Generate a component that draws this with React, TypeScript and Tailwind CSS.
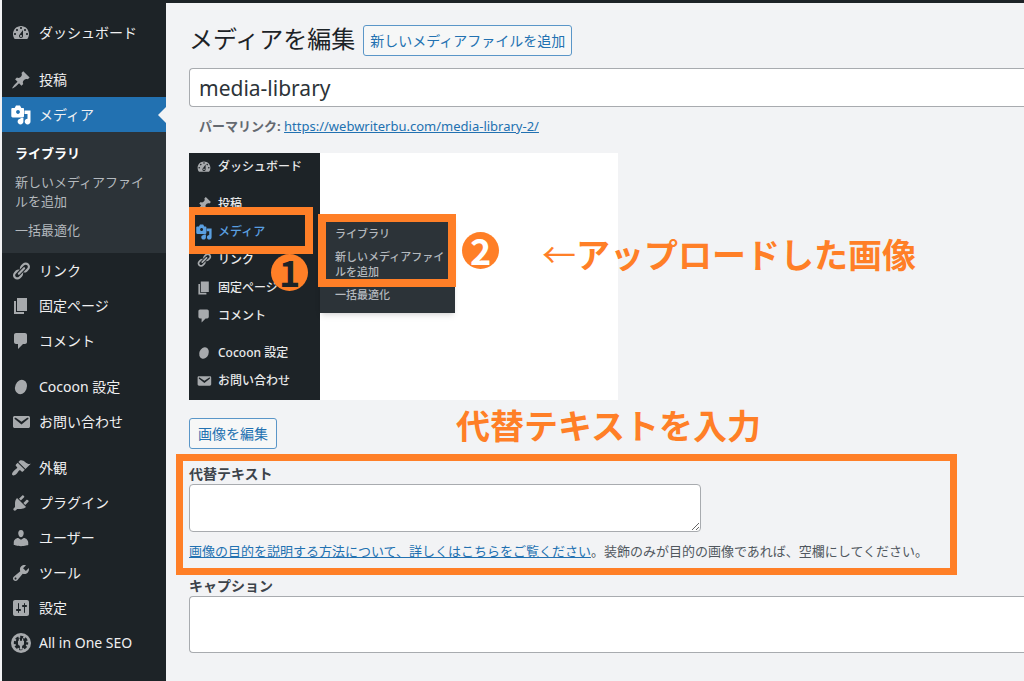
import { ReactNode } from "react"

const paths: Record<string, string> = {
  dashboard: "M3.76 16h12.48c1.1-1.37 1.76-3.11 1.76-5 0-4.42-3.58-8-8-8s-8 3.58-8 8c0 1.89.66 3.63 1.76 5zM10 4c.55 0 1 .45 1 1s-.45 1-1 1-1-.45-1-1 .45-1 1-1zM6 6c.55 0 1 .45 1 1s-.45 1-1 1-1-.45-1-1 .45-1 1-1zm8 0c.55 0 1 .45 1 1s-.45 1-1 1-1-.45-1-1 .45-1 1-1zm-5.37 5.55L12 7v6c0 1.1-.9 2-2 2s-2-.9-2-2c0-.57.24-1.08.63-1.45zM4 10c.55 0 1 .45 1 1s-.45 1-1 1-1-.45-1-1 .45-1 1-1zm12 0c.55 0 1 .45 1 1s-.45 1-1 1-1-.45-1-1 .45-1 1-1zm-5 3c0-.55-.45-1-1-1s-1 .45-1 1 .45 1 1 1 1-.45 1-1z",
  post: "M10.44 3.02l1.82-1.82 6.36 6.35-1.83 1.82c-1.05-.68-2.48-.57-3.41.36l-.75.75c-.92.93-1.04 2.35-.35 3.41l-1.83 1.82-2.41-2.41-2.8 2.79c-.42.42-3.38 2.71-3.8 2.29s1.86-3.39 2.28-3.81l2.79-2.79L4.1 9.36l1.83-1.82c1.05.69 2.48.57 3.4-.36l.75-.75c.93-.92 1.05-2.35.36-3.41z",
  media: "M13 11V4c0-.55-.45-1-1-1h-1.67L9 0.500H5L3.670 3H2C.9 3 .3 3.450.3 4v7c0 .8.600 1.400 1.400 1.400H12c.55 0 1-.6 1-1.400zM7 5.100c1.050 0 1.900.850 1.900 1.900S8.050 8.900 7 8.900 5.100 8.050 5.100 7 5.950 5.100 7 5.100zM13.500 5.500H19.500v11c0 1.600-1.300 2.900-2.900 2.900s-2.900-1.300-2.900-2.900 1.200-2.800 2.800-2.800V9h-3zM9.500 13.700V13h2.900v3.500c0 1.600-1.300 2.900-2.900 2.900s-2.900-1.300-2.900-2.900 1.300-2.800 2.900-2.800z",
  link: "M17.74 2.76c1.68 1.69 1.68 4.41 0 6.1l-1.53 1.52c-1.12 1.12-2.7 1.47-4.14 1.09l2.62-2.61.76-.77.76-.76c.84-.84.84-2.2 0-3.04-.84-.85-2.2-.85-3.04 0l-.77.76-3.38 3.38c-.37-1.44-.02-3.02 1.1-4.14l1.52-1.53c1.69-1.68 4.42-1.68 6.1 0zM8.59 13.43l5.34-5.34c.42-.42.42-1.1 0-1.52-.44-.43-1.13-.39-1.53 0l-5.33 5.34c-.42.42-.42 1.1 0 1.52.44.43 1.13.39 1.52 0zm-.76 2.29l4.14-4.15c.38 1.44.03 3.02-1.09 4.14l-1.52 1.53c-1.69 1.68-4.41 1.68-6.1 0-1.68-1.68-1.68-4.42 0-6.1l1.53-1.52c1.12-1.12 2.7-1.47 4.14-1.1l-4.14 4.15c-.85.84-.85 2.2 0 3.05.84.84 2.2.84 3.04 0z",
  page: "M6 15V2h10v13H6zm-1 1h8v2H3V5h2v11z",
  comment: "M5 2h9c1.1 0 2 .9 2 2v7c0 1.1-.9 2-2 2h-2l-5 5v-5H5c-1.1 0-2-.9-2-2V4c0-1.1.9-2 2-2z",
  mail: "M3.87 4h13.25C18.37 4 19 4.59 19 5.79v8.42c0 1.19-.63 1.79-1.88 1.79H3.87c-1.25 0-1.88-.6-1.88-1.79V5.79c0-1.2.63-1.79 1.88-1.79zm6.62 8.6l6.74-5.53c.24-.2.43-.66.13-1.07-.29-.41-.82-.42-1.17-.17l-5.7 3.86L4.8 5.83c-.35-.25-.88-.24-1.17.17-.3.41-.11.87.13 1.07z",
  brush: "M14.48 11.06L7.41 3.99l1.5-1.5c.5-.56 2.3-.47 3.51.32 1.21.8 1.43 1.28 2.91 2.1 1.18.64 2.45 1.26 4.45.85zm-.71.71L6.7 4.7 4.93 6.47c-.39.39-.39 1.02 0 1.41l1.06 1.06c.39.39.39 1.03 0 1.42-.6.6-1.43 1.11-2.21 1.69-.35.26-.7.53-1.01.84C1.43 14.23.4 16.08 1.4 17.07c.99 1 2.84-.03 4.18-1.36.31-.31.58-.66.85-1.02.57-.78 1.08-1.61 1.69-2.21.39-.39 1.02-.39 1.41 0l1.06 1.06c.39.39 1.02.39 1.41 0z",
  plugin: "M13.11 4.36L9.87 7.6 8 5.73l3.24-3.24c.35-.34 1.05-.2 1.56.32.52.51.66 1.21.31 1.55zm-8 1.77l.91-1.12 9.01 9.01-1.19.84c-.71.71-2.63 1.16-3.82 1.16H6.14L4.9 17.26c-.59.59-1.54.59-2.12 0-.59-.58-.59-1.53 0-2.12l1.24-1.24v-3.88c0-1.13.4-3.19 1.09-3.89zm7.26 3.97l3.24-3.24c.34-.35 1.04-.21 1.55.31.52.51.66 1.21.31 1.55l-3.24 3.25z",
  user: "M10 9.25c-2.27 0-2.73-3.44-2.73-3.44C7 4.02 7.82 2 9.97 2c2.16 0 2.98 2.02 2.71 3.81 0 0-.41 3.44-2.68 3.44zm0 2.57L12.72 10c2.39 0 4.52 2.33 4.52 4.53v2.49s-3.65 1.13-7.24 1.13c-3.65 0-7.24-1.13-7.24-1.13v-2.49c0-2.25 1.94-4.48 4.47-4.48z",
  tool: "M16.68 9.77c-1.34 1.34-3.3 1.67-4.95.99l-5.41 6.52c-.99.99-2.59.99-3.58 0s-.99-2.59 0-3.57l6.52-5.42c-.68-1.65-.35-3.61.99-4.95 1.28-1.28 3.12-1.62 4.72-1.06l-2.89 2.89 2.82 2.82 2.86-2.87c.53 1.58.18 3.39-1.08 4.65zM3.81 16.21c.4.39 1.04.39 1.43 0 .4-.4.4-1.04 0-1.43-.39-.4-1.03-.4-1.43 0-.39.39-.39 1.03 0 1.43z",
  settings: "M18 16V4c0-1.1-.9-2-2-2H4c-1.1 0-2 .9-2 2v12c0 1.1.9 2 2 2h12c1.1 0 2-.9 2-2zM8 11h1c.55 0 1 .45 1 1s-.45 1-1 1H8v1.5c0 .28-.22.5-.5.5s-.5-.22-.5-.5V13H6c-.55 0-1-.45-1-1s.45-1 1-1h1V5.5c0-.28.22-.5.5-.5s.5.22.5.5V11zm5-2h-1c-.55 0-1-.45-1-1s.45-1 1-1h1V5.5c0-.28.22-.5.5-.5s.5.22.5.5V7h1c.55 0 1 .45 1 1s-.45 1-1 1h-1v5.5c0 .28-.22.5-.5.5s-.5-.22-.5-.5V9z",
}

function Icon({ name, className }: { name: string; className: string }) {
  return (
    <svg viewBox="0 0 20 20" fill="currentColor" className={className} aria-hidden="true">
      {name === "cocoon" && <ellipse cx="10" cy="10" rx="5.8" ry="7.4" transform="rotate(22 10 10)" />}
      {name === "seo" && (
        <>
          <circle cx="10" cy="10" r="10" />
          {/* gear */}
          <circle cx="10" cy="10" r="5.6" fill="#1d2327" />
          <circle cx="10" cy="10" r="6" fill="none" stroke="#1d2327" strokeWidth="2.4" strokeDasharray="3 1.71" strokeDashoffset="1.5" />
          {/* plug */}
          <path d="M7.8 5.6h1.2v2.2h2V5.6h1.2v2.2h.8v2.6c0 1.3-.8 2.1-1.9 2.4v3.6H8.9v-3.6C7.8 12.5 7 11.7 7 10.4V7.8h.8z" />
        </>
      )}
      {paths[name] && <path d={paths[name]} fillRule="evenodd" />}
    </svg>
  )
}

function MenuItem({ icon, children, active }: { icon: string; children: ReactNode; active?: boolean }) {
  return (
    <li className={active ? "relative bg-[#2271b1]" : ""}>
      <a href="#" className="flex h-[35px] items-center gap-2 pl-[9px] text-[14px] leading-5 text-[#f0f0f1]">
        <Icon name={icon} className={active ? "size-5 text-white" : "size-5 text-[#a7aaad]"} />
        {children}
      </a>
      {active && <span className="absolute top-[10px] right-0 border-y-8 border-r-8 border-y-transparent border-r-[#f2f3f5]" />}
    </li>
  )
}

function MiniItem({ icon, children, active }: { icon: string; children: ReactNode; active?: boolean }) {
  return (
    <li className={active ? "flex h-7 items-center gap-[6px] pl-[7px] text-[#5a9fe0]" : "flex h-7 items-center gap-[6px] pl-[7px] text-[#e8e9ea]"}>
      <Icon name={icon} className={active ? "size-4" : "size-4 text-[#a7aaad]"} />
      {children}
    </li>
  )
}

function UploadedImage() {
  return (
    <div className="relative flex h-[247px] w-[429px] overflow-hidden bg-white">
      <ul className="flex w-[131px] flex-col justify-end bg-[#1d2327] pb-[5px] text-[12px] leading-4 font-medium whitespace-nowrap">
        <MiniItem icon="dashboard">ダッシュボード</MiniItem>
        <li className="h-[9px] shrink-0" />
        <MiniItem icon="post">投稿</MiniItem>
        <MiniItem icon="media" active>メディア</MiniItem>
        <MiniItem icon="link">リンク</MiniItem>
        <MiniItem icon="page">固定ページ</MiniItem>
        <MiniItem icon="comment">コメント</MiniItem>
        <li className="h-[9px] shrink-0" />
        <MiniItem icon="cocoon">Cocoon 設定</MiniItem>
        <MiniItem icon="mail">お問い合わせ</MiniItem>
      </ul>
      <ul className="mt-[63px] flex h-[97px] w-[135px] flex-col gap-2 bg-[#2c3338] px-[15px] pt-[10px] text-[11px] leading-[15px] font-medium whitespace-nowrap text-[#b4b9be] shadow-md">
        <li>ライブラリ</li>
        <li>新しいメディアファイ<br />ルを追加</li>
        <li>一括最適化</li>
      </ul>
      {/* markers */}
      <div className="absolute top-[54px] -left-0.5 h-[47px] w-[126px] border-8 border-[#ff7f27]" />
      <div className="absolute top-[61px] left-[129px] h-[73px] w-[138px] border-8 border-[#ff7f27]" />
      <span className="absolute top-[101px] left-[82px] flex size-[37px] items-center justify-center rounded-full bg-[#ff7f27] pb-1 font-['Noto_Sans_CJK_JP',sans-serif] text-[36px] leading-8 font-bold text-[#1d2327]">1</span>
      <span className="absolute top-[79px] left-[273px] flex size-[37px] items-center justify-center rounded-full bg-[#ff7f27] pb-1 font-['Noto_Sans_CJK_JP',sans-serif] text-[36px] leading-8 font-bold text-white">2</span>
    </div>
  )
}

export default function App() {
  return (
    <div className="min-h-screen border-l-2 border-[#f2f3f5] bg-[#f2f3f5] font-['Noto_Sans','Noto_Sans_CJK_JP',sans-serif] text-[#3c434a]">
      <div className="h-[3px] bg-[#1d2327]" />
      <div className="flex min-h-[calc(100vh-3px)]">
        <nav className="w-[164px] shrink-0 bg-[#1d2327] pt-3">
          <ul>
            <MenuItem icon="dashboard">ダッシュボード</MenuItem>
            <li className="h-3" />
            <MenuItem icon="post">投稿</MenuItem>
            <MenuItem icon="media" active>メディア</MenuItem>
            <li className="bg-[#2c3338] pt-3 pb-[13px] pl-[13px] text-[13px] leading-[19px] whitespace-nowrap text-[#b4b9be]">
              <ul className="flex flex-col gap-[10px]">
                <li><a href="#" className="font-bold text-white">ライブラリ</a></li>
                <li><a href="#">新しいメディアファイ<br />ルを追加</a></li>
                <li><a href="#">一括最適化</a></li>
              </ul>
            </li>
            <MenuItem icon="link">リンク</MenuItem>
            <MenuItem icon="page">固定ページ</MenuItem>
            <MenuItem icon="comment">コメント</MenuItem>
            <li className="h-[11px]" />
            <MenuItem icon="cocoon">Cocoon 設定</MenuItem>
            <MenuItem icon="mail">お問い合わせ</MenuItem>
            <li className="h-[11px]" />
            <MenuItem icon="brush">外観</MenuItem>
            <MenuItem icon="plugin">プラグイン</MenuItem>
            <MenuItem icon="user">ユーザー</MenuItem>
            <MenuItem icon="tool">ツール</MenuItem>
            <MenuItem icon="settings">設定</MenuItem>
            <MenuItem icon="seo">All in One SEO</MenuItem>
          </ul>
        </nav>

        <main className="min-w-0 flex-1 pt-[22px] pl-[23px]">
          <div className="flex items-center gap-2">
            <h1 className="pb-1 text-[24px] leading-[27px] text-[#1d2327]">メディアを編集</h1>
            <button className="h-[31px] rounded-[3px] border border-[#5a96c8] bg-[#f6f7f7] px-[6px] text-[14px] leading-5 text-[#2271b1]">新しいメディアファイルを追加</button>
          </div>

          <input aria-label="タイトル" defaultValue="media-library" className="mt-3 block h-[39px] w-full rounded-l border border-r-0 border-[#a8abaf] bg-white px-[9px] text-[21px] leading-7 text-[#2c3338]" />
          <p className="mt-[9px] pl-[10px] text-[13px] leading-5 text-[#646970]">
            <strong>パーマリンク:</strong>{" "}
            <a href="#" className="text-[#2271b1] underline">https://webwriterbu.com/media-library-2/</a>
          </p>

          <div className="relative mt-[17px]">
            <UploadedImage />
            <p className="absolute top-[82px] left-[353px] text-[34px] leading-10 font-bold whitespace-nowrap text-[#ff7f27]"><span className="font-normal">←</span>アップロードした画像</p>
          </div>

          <div className="relative mt-[18px]">
            <button className="h-[31px] rounded-[3px] border border-[#5a96c8] bg-[#f6f7f7] px-2 text-[14px] leading-5 text-[#2271b1]">画像を編集</button>
            <p className="absolute -top-3 left-[267px] text-[34px] leading-10 font-bold whitespace-nowrap text-[#ff7f27]">代替テキストを入力</p>
          </div>

          <div className="mt-[5px] -ml-[13px] h-[121px] w-[781px] border-7 border-[#ff7f27] px-[6px] pt-[3px]">
            <label htmlFor="alt" className="block text-[14px] leading-5 font-bold">代替テキスト</label>
            <textarea id="alt" className="block h-12 w-[512px] resize-y rounded border border-[#a8abaf] bg-white" />
            <p className="mt-[9px] text-[13px] leading-5 whitespace-nowrap text-[#50575e]">
              <a href="#" className="text-[#2271b1] underline">画像の目的を説明する方法について、詳しくはこちらをご覧ください</a>。装飾のみが目的の画像であれば、空欄にしてください。
            </p>
          </div>

          <label htmlFor="caption" className="mt-px block text-[14px] leading-5 font-bold">キャプション</label>
          <textarea id="caption" className="block h-[57px] w-full resize-none rounded-l border border-r-0 border-[#a8abaf] bg-white" />
        </main>
      </div>
    </div>
  )
}
